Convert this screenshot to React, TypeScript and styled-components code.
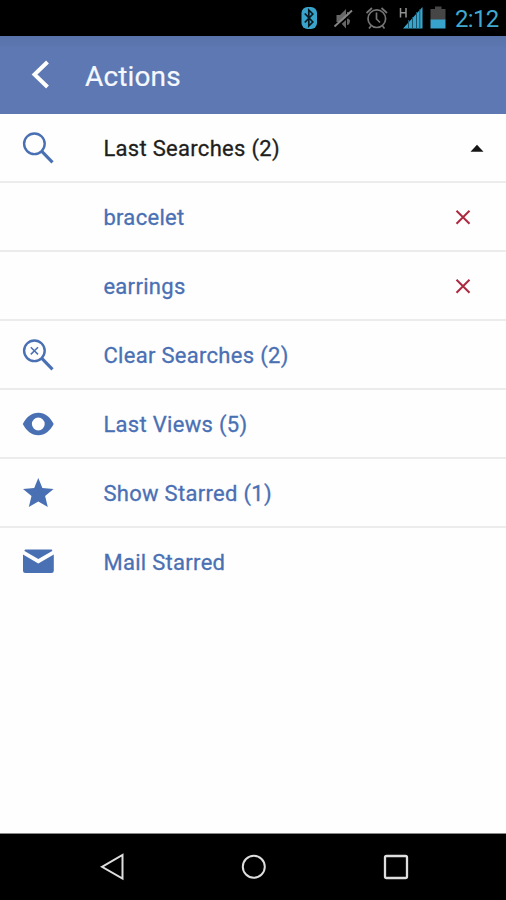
import React from "react";
import styled, { createGlobalStyle } from "styled-components";

const BLUE = "#4a70b4";

const GlobalStyle = createGlobalStyle`
  *, *::before, *::after { box-sizing: border-box; }
  body { margin: 0; background: #fff; font-family: Roboto, sans-serif; }
`;

const Screen = styled.div`
  display: flex;
  flex-direction: column;
  width: 506px;
  height: 900px;
  background: #fefefe;
  overflow: hidden;
`;

const StatusBar = styled.div`
  display: flex;
  justify-content: flex-end;
  align-items: center;
  flex: none;
  height: 36px;
  padding-right: 8px;
  background: #000;
`;

const StatusIcons = styled.svg`
  flex: none;
  width: 150px;
  height: 36px;
  margin-right: 5px;
`;

const Clock = styled.span`
  width: 43px;
  color: #3fa9cf;
  font-size: 24px;
  line-height: 36px;
  letter-spacing: -0.7px;
  white-space: nowrap;
  padding-top: 1px;
`;

const Header = styled.header`
  display: flex;
  align-items: center;
  flex: none;
  height: 78px;
  padding-left: 26px;
  background: linear-gradient(#5873a9, #5d78b2 12px, #5d78b2);
`;

const BackButton = styled.button`
  display: flex;
  width: 59px;
  padding: 0;
  border: 0;
  background: none;
`;

const Title = styled.h1`
  margin: 4px 0 0;
  color: #f5f8ff;
  font-size: 28px;
  font-weight: 400;
  line-height: 36px;
  letter-spacing: 0.15px;
  -webkit-text-stroke: 0.2px #f5f8ff;
`;

const List = styled.main`
  display: flex;
  flex-direction: column;
  flex: 1;
`;

const Row = styled.div<{ $last?: boolean }>`
  display: flex;
  align-items: center;
  height: 69px;
  padding-left: 18px;
  border-bottom: 2px solid ${(p) => (p.$last ? "transparent" : "#ececed")};
`;

const IconSlot = styled.div`
  display: flex;
  width: 85.4px;
`;

const Label = styled.span<{ $dark?: boolean }>`
  flex: 1;
  color: ${(p) => (p.$dark ? "#1e1e20" : BLUE)};
  font-size: 22px;
  font-weight: 400;
  line-height: 30px;
  letter-spacing: 0.3px;
  white-space: nowrap;
  padding-top: 3px;
  -webkit-text-stroke: 0.3px currentColor;
`;

const Trailing = styled.div<{ $right: number }>`
  display: flex;
  margin-right: ${(p) => p.$right}px;
`;

const NavBar = styled.nav`
  display: flex;
  align-items: center;
  justify-content: space-between;
  flex: none;
  height: 67px;
  padding: 0 95px 0 97px;
  background: #000;
  border-top: 1px solid #888;
`;

const NavIcon = styled.svg`
  width: 30px;
  height: 30px;
  fill: none;
  stroke: #dedede;
  stroke-width: 2;
`;

const SearchIcon = ({ clear = false }: { clear?: boolean }) => (
  <svg width="40" height="40" viewBox="0 0 40 40" fill="none" stroke={BLUE}>
    <circle cx="16.4" cy="15.8" r="10.3" strokeWidth="2.4" />
    <path d="M23.600 23.200 34.500 34.300" strokeWidth="3.100" />
    {clear && <path d="m12.800 12.200 7.200 7.200M20 12.200l-7.200 7.200" strokeWidth="1.500" />}
  </svg>
);

const EyeIcon = () => (
  <svg width="40" height="40" viewBox="0 0 40 40">
    <path
      fill={BLUE}
      fillRule="evenodd"
      d="M4.800 20C8.500 13 13.500 8.800 20.300 8.800S32 13 35.700 20c-3.700 7-8.600 11.200-15.400 11.200S8.500 27 4.800 20Zm21.900 0a6.400 6.400 0 1 0-12.800 0 6.400 6.400 0 0 0 12.800 0Z"
    />
  </svg>
);

const StarIcon = () => (
  <svg width="40" height="40" viewBox="0 0 40 40">
    <path fill={BLUE} d="m20.300 5 4.100 10 11.200.9-8.500 7.200 2.700 10.900-9.500-5.600-9.500 5.600 2.700-10.900L5 15.900l11.200-.9Z" />
  </svg>
);

const MailIcon = () => (
  <svg width="40" height="40" viewBox="0 0 40 40" fill={BLUE}>
    <path d="M7.500 7.500h26q1 0 .7 1.500L20.300 17 6.500 9q-.2-1.500 1-1.500Z" />
    <path d="m5 12.500 15.300 9 15.500-9v16.300q0 2.200-2.200 2.200H7.200Q5 31 5 28.800Z" />
  </svg>
);

const RemoveIcon = () => (
  <svg width="16" height="16" viewBox="0 0 16 16">
    <path d="M1.500 1.700 14.500 14.700M14.500 1.700 1.500 14.700" stroke="#ad2940" strokeWidth="2" />
  </svg>
);

const CollapseIcon = () => (
  <svg width="14" height="8" viewBox="0 0 14 8">
    <path d="M.5 7.800 7 .8l6.500 7Z" fill="#161616" />
  </svg>
);

const items: {
  text: string;
  dark?: boolean;
  icon?: React.ReactNode;
  trailing?: React.ReactNode;
  right?: number;
}[] = [
  { text: "Last Searches (2)", dark: true, icon: <SearchIcon />, trailing: <CollapseIcon />, right: 22 },
  { text: "bracelet", trailing: <RemoveIcon />, right: 35 },
  { text: "earrings", trailing: <RemoveIcon />, right: 35 },
  { text: "Clear Searches (2)", icon: <SearchIcon clear /> },
  { text: "Last Views (5)", icon: <EyeIcon /> },
  { text: "Show Starred (1)", icon: <StarIcon /> },
  { text: "Mail Starred", icon: <MailIcon /> },
];

export default function App() {
  return (
    <Screen>
      <GlobalStyle />
      <StatusBar>
        <StatusIcons viewBox="300 0 150 36" fill="none">
          <rect x="301.500" y="7" width="15.500" height="22" rx="6" fill="#38a3cb" />
          <path d="m304.800 13.500 8 8.500-4 4V10l4 4-8 8.500" stroke="#06171d" strokeWidth="1.700" />
          <path d="M336.500 15h3.500l6-6v19.500l-6-6.500h-3.500ZM347 12q4 0 3 5-4 1 0 3 0 5-3 5Z" fill="#666" />
          <path d="m335.500 28 18-16" stroke="#000" strokeWidth="2" />
          <path d="m334.500 26.500 17.500-16" stroke="#858585" strokeWidth="1.800" />
          <g stroke="#747474" strokeWidth="1.700">
            <circle cx="376.800" cy="18.700" r="8.800" />
            <path d="M376.500 12.500v6.500l3.500 3.500M366.500 13l5.500-5M387 13l-5.500-5M371 26l-2 2.500M382.500 26l2 2.500" />
          </g>
          <path d="M400.500 8v9.500M406 8v9.500M400.500 12.700h5.500" stroke="#929292" strokeWidth="1.500" />
          <path d="M422.500 7v21.500H403Z" fill="#38a3cb" />
          <path d="M408.500 20v9M412.500 17v12M416.500 12v17M419.800 9v20" stroke="#17556c" strokeWidth="1" />
          <path d="M430.500 9h4.500V6.500h6.500V9h4v11h-15Z" fill="#464646" />
          <path d="M430.500 19.500h15v9h-15Z" fill="#38a3cb" />
        </StatusIcons>
        <Clock>2:12</Clock>
      </StatusBar>
      <Header>
        <BackButton aria-label="Back">
          <svg width="30" height="34" viewBox="0 0 30 34" fill="none">
            <path d="M21.500 4 8.500 16.500l13 12.500" stroke="#fff" strokeWidth="4" />
          </svg>
        </BackButton>
        <Title>Actions</Title>
      </Header>
      <List>
        {items.map((item, i) => (
          <Row key={item.text} $last={i === items.length - 1}>
            <IconSlot>{item.icon}</IconSlot>
            <Label $dark={item.dark}>{item.text}</Label>
            {item.trailing && <Trailing $right={item.right ?? 0}>{item.trailing}</Trailing>}
          </Row>
        ))}
      </List>
      <NavBar>
        <NavIcon viewBox="0 0 30 30"><path d="M5 14.800 25.500 3v23.500Z" /></NavIcon>
        <NavIcon viewBox="0 0 30 30"><circle cx="14.800" cy="14.800" r="11" /></NavIcon>
        <NavIcon viewBox="0 0 30 30"><rect x="4" y="4" width="22" height="22" rx="1.500" strokeWidth="2.300" /></NavIcon>
      </NavBar>
    </Screen>
  );
}
